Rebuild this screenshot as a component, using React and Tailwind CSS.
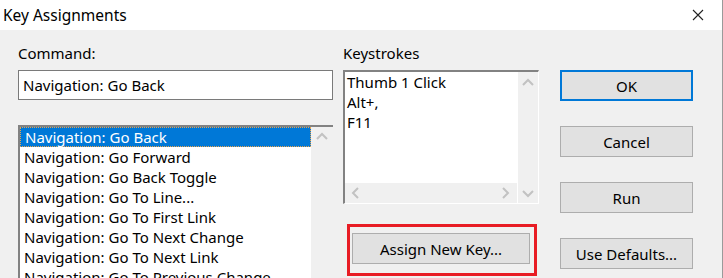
import React from 'react';

const commands = [
  'Navigation: Go Back',
  'Navigation: Go Forward',
  'Navigation: Go Back Toggle',
  'Navigation: Go To Line...',
  'Navigation: Go To First Link',
  'Navigation: Go To Next Change',
  'Navigation: Go To Next Link',
  'Navigation: Go To Previous Change',
];

const keystrokes = ['Thumb 1 Click', 'Alt+,', 'F11'];

// small disabled scrollbar chevron
const Chevron = ({ dir }) => {
  const pts = {
    up: '1,8 6,3 11,8',
    down: '1,4 6,9 11,4',
    left: '8,1 3,6 8,11',
    right: '4,1 9,6 4,11',
  }[dir];
  return (
    <svg width="12" height="12" viewBox="0 0 12 12">
      <polyline points={pts} fill="none" stroke="#c2c2c2" strokeWidth="2" />
    </svg>
  );
};

const Button = ({ children, primary }) => (
  <div
    className={
      'h-[31px] flex items-center justify-center bg-[#e1e1e1] ' +
      (primary ? 'border-2 border-[#0078d7]' : 'border border-[#adadad]')
    }
  >
    {children}
  </div>
);

export default function App() {
  return (
    <div className="w-[723px] h-[278px] overflow-hidden bg-[#f0f0f0] text-[15px] leading-[20px] text-black font-['Noto_Sans',sans-serif] border-r border-[#9a9a9a]">
      {/* title bar */}
      <div className="h-[30px] bg-white flex items-center justify-between pl-[3px] pr-[18px]">
        <span className="text-[15.5px]">Key Assignments</span>
        <svg width="12" height="12" viewBox="0 0 12 12">
          <path d="M1 1 L11 11 M11 1 L1 11" stroke="#222" strokeWidth="1.1" fill="none" />
        </svg>
      </div>

      <div className="flex pl-[18px] pt-[13px]">
        {/* command column */}
        <div className="w-[315px] flex flex-col">
          <div>Command:</div>
          <div className="mt-[7px] h-[30px] border border-[#7a7a7a] bg-white flex items-center pl-[4px]">
            Navigation: Go Back
          </div>
          <div className="mt-[25px] h-[160px] flex bg-white border-t-2 border-l-2 border-[#828282]">
            <div className="flex-1">
              {commands.map((c, i) => (
                <div
                  key={c}
                  className={
                    'h-[20px] pl-[4px] whitespace-nowrap leading-[18px] ' +
                    (i === 0 ? 'bg-[#0078d7] text-white border border-dotted border-[#e9a44d]' : 'pt-[1px]')
                  }
                >
                  {c}
                </div>
              ))}
            </div>
            <div className="w-[22px] bg-[#f0f0f0] flex justify-center pt-[4px]">
              <Chevron dir="up" />
            </div>
          </div>
        </div>

        {/* keystrokes column */}
        <div className="ml-[10px] w-[196px] flex flex-col">
          <div>Keystrokes</div>
          <div className="mt-[7px] h-[134px] flex flex-col bg-white border-t-2 border-l-2 border-[#828282] border-r border-b border-r-white border-b-white">
            <div className="flex-1 flex">
              <div className="flex-1 pl-[2px]">
                {keystrokes.map((k) => (
                  <div key={k}>{k}</div>
                ))}
              </div>
              <div className="w-[20px] bg-[#f0f0f0] flex justify-center pt-[5px]">
                <Chevron dir="up" />
              </div>
            </div>
            <div className="h-[20px] flex">
              <div className="flex-1 bg-[#f0f0f0] flex items-center justify-between pl-[5px] pr-[6px] border-r border-white">
                <Chevron dir="left" />
                <Chevron dir="right" />
              </div>
              <div className="w-[20px] bg-[#f0f0f0] flex items-center justify-center">
                <Chevron dir="down" />
              </div>
            </div>
          </div>
          <div className="mt-[20px] ml-[4px] w-[190px] h-[52px] border-[3px] border-[#e81c24] pt-[6px] pl-[2px]">
            <div className="w-[178px]">
              <Button>Assign New Key...</Button>
            </div>
          </div>
        </div>

        {/* buttons column */}
        <div className="ml-[21px] w-[133px] pt-[27px] flex flex-col gap-[25px]">
          <Button primary>OK</Button>
          <Button>Cancel</Button>
          <Button>Run</Button>
          <Button>Use Defaults...</Button>
        </div>
      </div>
    </div>
  );
}
